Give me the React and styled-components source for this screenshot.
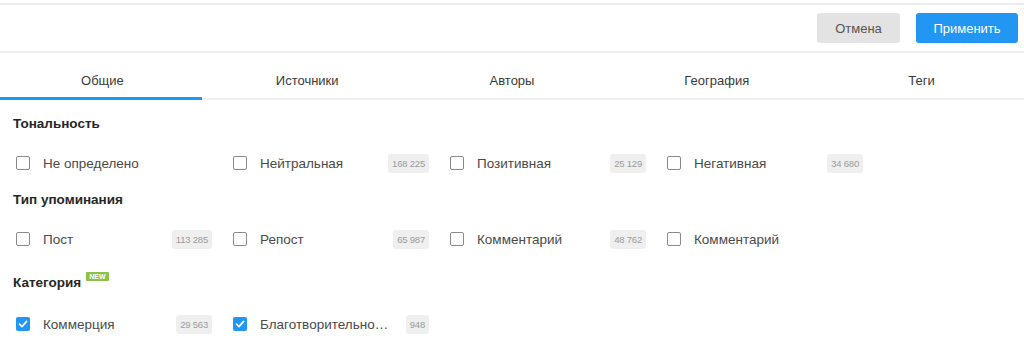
import React from 'react';
import styled, { createGlobalStyle } from 'styled-components';

const GlobalStyle = createGlobalStyle`
  body {
    margin: 0;
    background: #fff;
    font-family: "Liberation Sans", Arial, sans-serif;
  }
`;

const tabs = ['Общие', 'Источники', 'Авторы', 'География', 'Теги'];

const sections = [
  {
    title: 'Тональность',
    items: [
      { label: 'Не определено' },
      { label: 'Нейтральная', count: '168 225' },
      { label: 'Позитивная', count: '25 129' },
      { label: 'Негативная', count: '34 680' },
    ],
  },
  {
    title: 'Тип упоминания',
    items: [
      { label: 'Пост', count: '113 285' },
      { label: 'Репост', count: '65 987' },
      { label: 'Комментарий', count: '48 762' },
      { label: 'Комментарий' },
    ],
  },
  {
    title: 'Категория',
    tag: 'NEW',
    items: [
      { label: 'Коммерция', count: '29 563', checked: true },
      { label: 'Благотворительно…', count: '948', checked: true },
    ],
  },
];

function Check({ checked }) {
  return (
    <Box $checked={checked}>
      {checked && (
        <svg width="10" height="10" viewBox="0 0 10 10">
          <path d="M1.5 5.2 L4 7.6 L8.6 2.4" fill="none" stroke="#fff" strokeWidth="1.7" strokeLinecap="round" strokeLinejoin="round" />
        </svg>
      )}
    </Box>
  );
}

function App() {
  return (
    <Page>
      <GlobalStyle />
      <Header>
        <Button>Отмена</Button>
        <Button $primary>Применить</Button>
      </Header>
      <TabBar>
        {tabs.map((t, i) => (
          <Tab key={t} $active={i === 0}>{t}</Tab>
        ))}
      </TabBar>
      <Content>
        {sections.map((s) => (
          <Section key={s.title} $tagged={!!s.tag}>
            <Heading $tagged={!!s.tag}>
              {s.title}
              {s.tag && <Tag>{s.tag}</Tag>}
            </Heading>
            <Row>
              {s.items.map((it, i) => (
                <Option key={i}>
                  <Check checked={it.checked} />
                  <Label>{it.label}</Label>
                  {it.count && <Count>{it.count}</Count>}
                </Option>
              ))}
            </Row>
          </Section>
        ))}
      </Content>
    </Page>
  );
}

const Page = styled.div`
  width: 1024px;
  height: 352px;
  overflow: hidden;
  padding-top: 3px;
  box-sizing: border-box;
`;

const Header = styled.div`
  display: flex;
  justify-content: flex-end;
  gap: 16px;
  border-top: 2px solid #ececec;
  border-bottom: 2px solid #ededed;
  padding: 8px 6px 8px 0;
`;

const Button = styled.button`
  height: 30px;
  border: none;
  border-radius: 3px;
  font-family: inherit;
  font-size: 13px;
  padding: 0;
  width: ${(p) => (p.$primary ? '102px' : '83px')};
  background: ${(p) => (p.$primary ? '#2196f3' : '#e3e3e3')};
  color: ${(p) => (p.$primary ? '#fff' : '#555')};
`;

const TabBar = styled.div`
  display: grid;
  grid-template-columns: repeat(5, 1fr);
  border-bottom: 2px solid #efefef;
`;

const Tab = styled.div`
  position: relative;
  height: 45px;
  box-sizing: border-box;
  padding-top: 20px;
  text-align: center;
  font-size: 13px;
  line-height: 16px;
  color: #3a3a3a;
  &::after {
    content: '';
    display: ${(p) => (p.$active ? 'block' : 'none')};
    position: absolute;
    left: 0;
    right: 3px;
    bottom: -2px;
    height: 3px;
    background: #2196f3;
  }
`;

const Content = styled.div`
  padding: 14px 0 0 13px;
`;

const Section = styled.div`
  display: flex;
  flex-direction: column;
  gap: ${(p) => (p.$tagged ? '21px' : '19px')};
  margin-bottom: 17px;
`;

const Heading = styled.div`
  display: flex;
  align-items: flex-start;
  padding-top: ${(p) => (p.$tagged ? '7px' : '0')};
  font-size: 13.5px;
  font-weight: bold;
  line-height: 20px;
  color: #262626;
`;

const Tag = styled.span`
  margin: -1px 0 0 5px;
  height: 9px;
  padding: 0 3px;
  border-radius: 1px;
  background: #8bc34a;
  color: #fff;
  font-size: 7px;
  font-weight: bold;
  line-height: 9px;
`;

const Row = styled.div`
  display: grid;
  grid-template-columns: repeat(4, 196px);
  column-gap: 21px;
  padding-left: 3px;
`;

const Option = styled.div`
  display: flex;
  align-items: center;
  height: 20px;
  min-width: 0;
`;

const Box = styled.span`
  flex: none;
  display: flex;
  align-items: center;
  justify-content: center;
  width: 14px;
  height: 14px;
  box-sizing: border-box;
  border-radius: 2px;
  border: ${(p) => (p.$checked ? 'none' : '1.5px solid #8a8a8a')};
  background: ${(p) => (p.$checked ? '#2196f3' : '#fff')};
`;

const Label = styled.span`
  flex: 1;
  min-width: 0;
  margin: 0 12px 0 13px;
  font-size: 13.5px;
  color: #4a4a4a;
  white-space: nowrap;
`;

const Count = styled.span`
  flex: none;
  height: 19px;
  padding: 0 4px;
  border-radius: 3px;
  background: #efefef;
  color: #9b9b9b;
  font-size: 9.5px;
  letter-spacing: -0.2px;
  line-height: 19px;
`;

export default App;
